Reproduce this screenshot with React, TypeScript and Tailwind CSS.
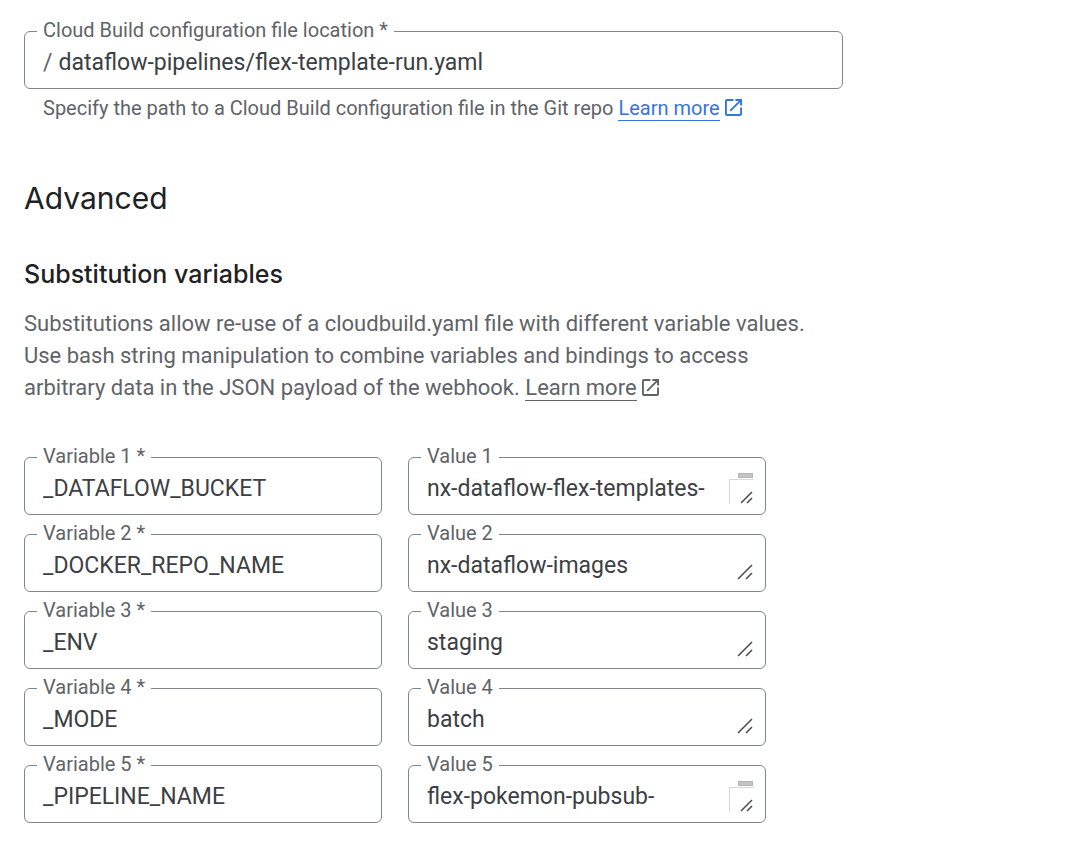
import React, { useId } from "react";

type FieldProps = {
  label: string;
  children: (id: string) => React.ReactNode;
};

function OutlinedField({ label, children }: FieldProps) {
  const id = useId();
  return (
    <fieldset className="relative min-w-0 rounded-md border border-[#80868b] pr-4 pb-[5px] pl-3">
      <legend className="px-1.5 pb-0.5 text-[20px] leading-[18px] text-[#5f6368]">
        <label htmlFor={id}>{label}</label>
      </legend>
      <div className="flex h-[42px] items-end pl-1.5 text-[23px] leading-10 text-[#3c4043]">{children(id)}</div>
    </fieldset>
  );
}

function OpenInNew() {
  return (
    <svg viewBox="3 3 18 18" className="ml-[5px] inline-block size-[17px] align-[-1px]" fill="currentColor" aria-hidden="true">
      <path d="M19 19H5V5h7V3H5a2 2 0 0 0-2 2v14a2 2 0 0 0 2 2h14c1.1 0 2-.9 2-2v-7h-2v7zM14 3v2h3.59l-9.83 9.83 1.41 1.41L19 6.41V10h2V3h-7z" />
    </svg>
  );
}

function ResizeGrip() {
  return (
    <svg viewBox="0 0 16 16" className="pointer-events-none absolute right-3 bottom-[11px] size-4" fill="none" stroke="#4a4a4a" strokeWidth="1.5" aria-hidden="true">
      <path d="M1 15 15 1M9 15l6-6" />
    </svg>
  );
}

function ScrollCorner() {
  return (
    <span className="pointer-events-none absolute right-[11px] bottom-2.5 block h-[31px] w-[25px]" aria-hidden="true">
      <span className="ml-[9px] block h-[5px] w-[15px] border border-[#b5b5b5] bg-[#c4c4c4]" />
      <span className="mt-px block h-[25px] border-t border-l border-[#d8d8d8] bg-white pt-[11px] pl-2.5">
        <svg viewBox="0 0 13 13" className="size-[13px]" fill="none" stroke="#4a4a4a" strokeWidth="1.5">
          <path d="M1 12 12 1M7 12l5-5" />
        </svg>
      </span>
    </span>
  );
}

const variables = [
  { name: "_DATAFLOW_BUCKET", value: "nx-dataflow-flex-templates-", overflows: true },
  { name: "_DOCKER_REPO_NAME", value: "nx-dataflow-images", overflows: false },
  { name: "_ENV", value: "staging", overflows: false },
  { name: "_MODE", value: "batch", overflows: false },
  { name: "_PIPELINE_NAME", value: "flex-pokemon-pubsub-", overflows: true },
];

export default function App() {
  return (
    <main className="bg-white px-6 pt-[21px] pb-5 font-['Roboto',sans-serif]">
      <div className="max-w-[819px]">
        <OutlinedField label="Cloud Build configuration file location *">
          {(id) => (
            <>
              <span className="mr-1.5 text-[#5f6368]">/</span>
              <input id={id} defaultValue="dataflow-pipelines/flex-template-run.yaml" className="h-10 min-w-0 flex-1 outline-none" />
            </>
          )}
        </OutlinedField>
        <p className="mt-[7px] pl-[19px] text-[20px] leading-6 text-[#5f6368]">
          Specify the path to a Cloud Build configuration file in the Git repo{" "}
          <a href="#config" className="whitespace-nowrap text-[#3574e2]">
            <span className="border-b border-current">Learn more</span>
            <OpenInNew />
          </a>
        </p>

        <h1 className="mt-[58px] font-['Inter',sans-serif] text-[30px] leading-10 text-[#202124]">Advanced</h1>
        <h2 className="mt-10 font-['Inter',sans-serif] text-[25px] leading-8 font-medium text-[#202124]">Substitution variables</h2>
        <p className="mt-[18px] max-w-[800px] text-[22px] leading-8 text-[#5f6368]">
          Substitutions allow re-use of a cloudbuild.yaml file with different variable values. Use bash string manipulation to combine variables and bindings to access arbitrary data in the JSON payload of the webhook.{" "}
          <a href="#substitutions" className="whitespace-nowrap">
            <span className="border-b border-current">Learn more</span>
            <OpenInNew />
          </a>
        </p>
      </div>

      <div className="mt-[43px] grid max-w-[742px] grid-cols-2 gap-x-[26px] gap-y-[9px]">
        {variables.map((variable, i) => (
          <React.Fragment key={variable.name}>
            <OutlinedField label={`Variable ${i + 1} *`}>
              {(id) => <input id={id} defaultValue={variable.name} className="h-10 w-full outline-none" />}
            </OutlinedField>
            <OutlinedField label={`Value ${i + 1}`}>
              {(id) => (
                <>
                  <textarea id={id} rows={1} defaultValue={variable.value} className="h-10 w-full resize-none overflow-hidden whitespace-nowrap outline-none" />
                  {variable.overflows ? <ScrollCorner /> : <ResizeGrip />}
                </>
              )}
            </OutlinedField>
          </React.Fragment>
        ))}
      </div>
    </main>
  );
}
